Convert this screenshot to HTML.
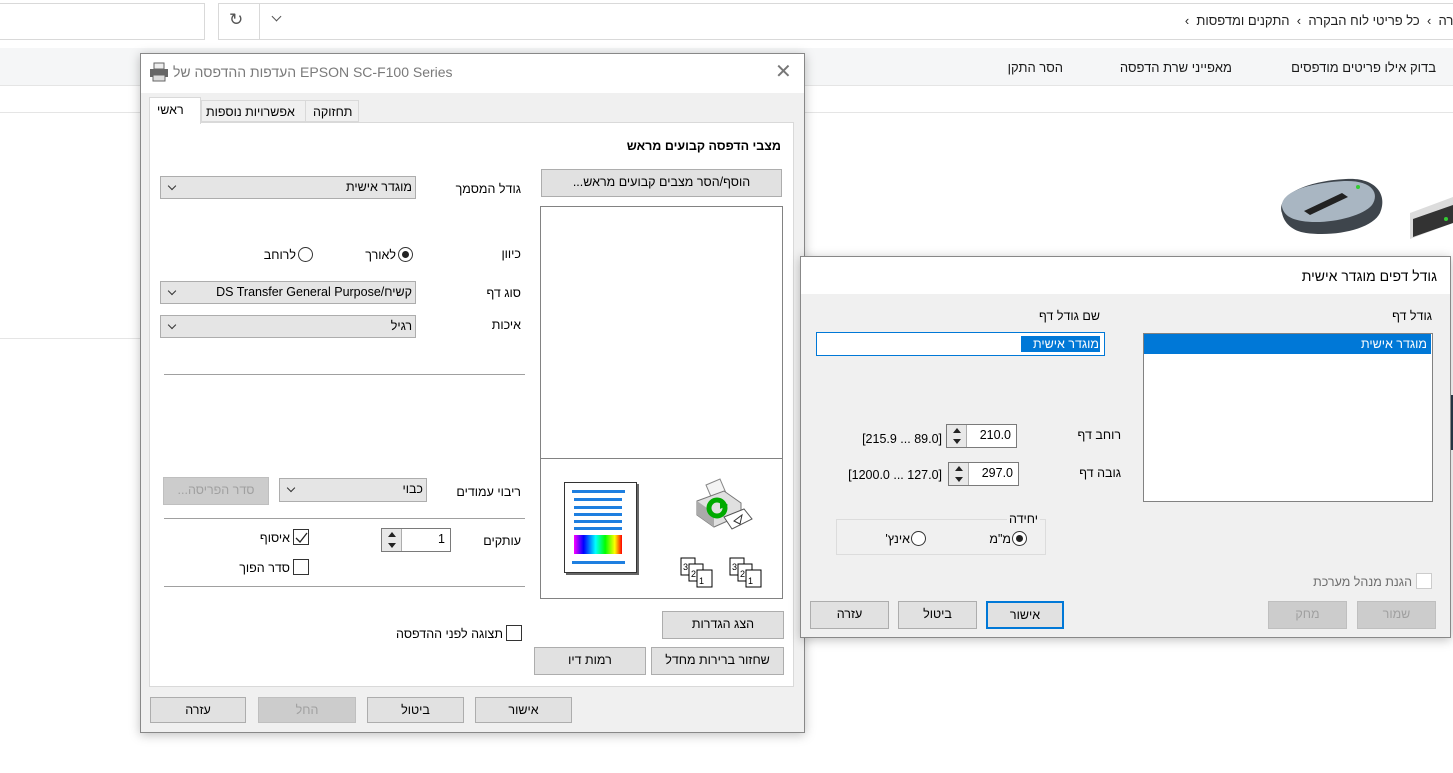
<!DOCTYPE html>
<html><head><meta charset="utf-8"><style>
*{box-sizing:border-box;margin:0;padding:0}
body{width:1453px;height:773px;position:relative;overflow:hidden;background:#fff;font-family:"Liberation Sans","DejaVu Sans",sans-serif;font-size:12.5px;color:#000}
.a{position:absolute}
.r{position:absolute;direction:rtl;white-space:nowrap;line-height:16px}
.btn{position:absolute;background:#e1e1e1;border:1px solid #adadad;text-align:center;direction:rtl;line-height:25px;white-space:nowrap}
.dis{color:#a0a0a0;background:#ccc;border-color:#bfbfbf}
.cb{position:absolute;background:#e5e5e5;border:1px solid #adadad;direction:rtl;padding-right:3px;line-height:21px;white-space:nowrap}
.cb:after{content:"";position:absolute;left:8px;top:6px;width:5px;height:5px;border-right:1px solid #333;border-bottom:1px solid #333;transform:rotate(45deg)}
.chk{position:absolute;width:16px;height:16px;border:1px solid #333;background:#fff}
.rad{position:absolute;width:15px;height:15px;border:1px solid #333;border-radius:50%;background:#fff}
.rad.on:after{content:"";position:absolute;left:3px;top:3px;width:7px;height:7px;border-radius:50%;background:#222}
.hr{position:absolute;height:1px;background:#a0a0a0}
.spin{position:absolute;border:1px solid #7a7a7a;background:#fff}
.spin .b{position:absolute;left:0;top:0;width:20px;height:100%;background:#e8e8e8;border-right:1px solid #adadad}
.spin .b:before{content:"";position:absolute;left:6px;top:3px;border:4px solid transparent;border-bottom:5px solid #222;border-top:0}
.spin .b:after{content:"";position:absolute;left:6px;bottom:3px;border:4px solid transparent;border-top:5px solid #222;border-bottom:0}
.spin .v{position:absolute;right:5px;top:3px}
</style></head><body>
<div class="a" style="left:-1px;top:3px;width:206px;height:37px;border:1px solid #d9d9d9"></div>
<div class="a" style="left:218px;top:3px;width:1240px;height:37px;border:1px solid #d9d9d9"></div>
<div class="a" style="left:259px;top:4px;width:1px;height:35px;background:#d9d9d9"></div>
<div class="a" style="left:229px;top:10px;font-size:17px;color:#555">↻</div>
<div class="a" style="left:273px;top:13px;width:7px;height:7px;border-right:1px solid #555;border-bottom:1px solid #555;transform:rotate(45deg)"></div>
<div class="r" style="right:-8px;top:13px;color:#222;font-size:13px">קרה &nbsp;›&nbsp; כל פריטי לוח הבקרה &nbsp;›&nbsp; התקנים ומדפסות &nbsp;›</div>
<div class="a" style="left:0;top:48px;width:1453px;height:38px;background:#f5f6f7;border-bottom:1px solid #e5e5e5"></div>
<div class="r" style="right:17px;top:60px;color:#1a1a1a;font-size:13px">בדוק אילו פריטים מודפסים</div>
<div class="r" style="right:221px;top:60px;color:#1a1a1a;font-size:13px">מאפייני שרת הדפסה</div>
<div class="r" style="right:390px;top:60px;color:#1a1a1a;font-size:13px">הסר התקן</div>
<div class="a" style="left:0;top:112px;width:1453px;height:1px;background:#e5e5e5"></div>
<div class="a" style="left:0;top:338px;width:140px;height:1px;background:#e5e5e5"></div>
<svg class="a" style="left:1276px;top:175px" width="112" height="64"><path d="M6 38 C0 20 30 6 70 4 C100 2 112 20 104 38 C96 54 60 62 30 58 C16 56 8 48 6 38Z" fill="#3e454c"/><path d="M6 32 C4 18 30 8 68 6 C96 5 104 18 96 30 C86 42 50 50 26 46 C14 44 8 40 6 32Z" fill="#a9b6c2"/><path d="M28 36 L66 18 L72 22 L34 40Z" fill="#222"/><circle cx="82" cy="12" r="2" fill="#3c3"/></svg>
<svg class="a" style="left:1410px;top:193px" width="43" height="50"><path d="M0 20 L43 4 L43 30 L0 46Z" fill="#dcdcdc"/><path d="M3 26 L43 12 L43 30 L3 44Z" fill="#333"/><circle cx="36" cy="26" r="2" fill="#3c3"/></svg>
<div class="a" style="left:1447px;top:395px;width:6px;height:55px;background:#2a3a4a"></div>

<div class="a" style="left:140px;top:53px;width:665px;height:680px;background:#f0f0f0;border:1px solid #888;box-shadow:0 2px 10px rgba(0,0,0,.25)"></div>
<div class="a" style="left:141px;top:54px;width:663px;height:39px;background:#fff"></div>
<svg class="a" style="left:149px;top:62px" width="20" height="20"><rect x="5" y="1" width="10" height="6" fill="#eee" stroke="#666"/><rect x="1" y="7" width="18" height="8" fill="#666"/><rect x="4" y="13" width="12" height="6" fill="#ddd" stroke="#666"/></svg>
<div class="a" style="left:173px;top:64px;font-size:14px;color:#7a7a7a;white-space:nowrap">העדפות ההדפסה של EPSON SC-F100 Series</div>
<div class="a" style="left:775px;top:59px;font-size:20px;color:#777;font-weight:300">✕</div>
<div class="a" style="left:149px;top:122px;width:645px;height:565px;background:#fff;border:1px solid #d9d9d9"></div>
<div class="a" style="left:149px;top:97px;width:52px;height:27px;background:#fff;border:1px solid #d9d9d9;border-bottom:none"></div>
<div class="r" style="left:157px;top:102px">ראשי</div>
<div class="a" style="left:201px;top:100px;width:105px;height:22px;background:#f0f0f0;border:1px solid #d9d9d9"></div>
<div class="r" style="left:206px;top:104px">אפשרויות נוספות</div>
<div class="a" style="left:305px;top:100px;width:54px;height:22px;background:#f0f0f0;border:1px solid #d9d9d9"></div>
<div class="r" style="left:313px;top:104px">תחזוקה</div>

<div class="r" style="right:672px;top:138px;font-weight:bold">מצבי הדפסה קבועים מראש</div>
<div class="btn" style="left:541px;top:169px;width:241px;height:28px">הוסף/הסר מצבים קבועים מראש...</div>
<div class="a" style="left:540px;top:206px;width:243px;height:253px;border:1px solid #828282;background:#fff"></div>
<div class="a" style="left:540px;top:458px;width:243px;height:141px;border:1px solid #828282;background:#fff"></div>
<div class="a" style="left:564px;top:482px;width:73px;height:91px;background:#fff;border:1px solid #333;box-shadow:2px 2px 0 #666"></div>
<svg class="a" style="left:570px;top:490px" width="60" height="80">
<rect x="2" y="0" width="53" height="3" fill="#1e7fe0"/>
<g fill="#1e7fe0"><rect x="4" y="8" width="48" height="3"/><rect x="4" y="16" width="48" height="3"/><rect x="4" y="23" width="48" height="3"/><rect x="4" y="30" width="48" height="3"/><rect x="4" y="37" width="48" height="3"/></g>
<defs><linearGradient id="rb"><stop offset="0" stop-color="#f0f"/><stop offset=".2" stop-color="#00f"/><stop offset=".45" stop-color="#0ff"/><stop offset=".65" stop-color="#0f0"/><stop offset=".85" stop-color="#ff0"/><stop offset="1" stop-color="#f00"/></linearGradient></defs>
<rect x="4" y="45" width="48" height="19" fill="url(#rb)"/>
<rect x="2" y="71" width="53" height="3" fill="#1e7fe0"/></svg>
<svg class="a" style="left:694px;top:477px" width="60" height="60">
<path d="M12 8 L26 2 L32 16 L18 22Z" fill="#f4f4f4" stroke="#888"/>
<path d="M3 24 L30 14 L47 26 L47 38 L20 50 L3 38Z" fill="#e0e0e0" stroke="#777"/>
<path d="M3 24 L20 36 L20 50 L3 38Z" fill="#aaa"/>
<path d="M30 40 L50 32 L58 42 L38 52Z" fill="#fff" stroke="#555"/>
<path d="M40 44 L48 38 L46 47Z" fill="none" stroke="#333"/>
<circle cx="23" cy="31" r="8" fill="none" stroke="#0a0" stroke-width="5"/><path d="M26 22 L34 28 L26 32Z" fill="#0a0"/></svg>
<svg class="a" style="left:680px;top:557px" width="40" height="32"><g fill="#fff" stroke="#000" stroke-width="1"><rect x="1" y="1" width="14" height="17"/><rect x="9" y="7" width="14" height="17"/><rect x="17" y="13" width="15" height="17"/></g><g font-size="9" font-family="Liberation Sans"><text x="3" y="13">3</text><text x="11" y="20">2</text><text x="19" y="27">1</text></g></svg>
<svg class="a" style="left:729px;top:557px" width="40" height="32"><g fill="#fff" stroke="#000" stroke-width="1"><rect x="1" y="1" width="14" height="17"/><rect x="9" y="7" width="14" height="17"/><rect x="17" y="13" width="15" height="17"/></g><g font-size="9" font-family="Liberation Sans"><text x="3" y="13">3</text><text x="11" y="20">2</text><text x="19" y="27">1</text></g></svg>

<div class="cb" style="left:160px;top:176px;width:256px;height:23px">מוגדר אישית</div>
<div class="r" style="right:932px;top:181px">גודל המסמך</div>
<div class="r" style="right:932px;top:246px">כיוון</div>
<div class="rad on" style="left:398px;top:247px"></div><div class="r" style="right:1057px;top:247px">לאורך</div>
<div class="rad" style="left:298px;top:247px"></div><div class="r" style="right:1157px;top:247px">לרוחב</div>
<div class="r" style="right:932px;top:285px">סוג דף</div>
<div class="cb" style="left:160px;top:281px;width:256px;height:23px">קשיח/DS Transfer General Purpose</div>
<div class="r" style="right:932px;top:317px">איכות</div>
<div class="cb" style="left:160px;top:315px;width:256px;height:23px">רגיל</div>
<div class="hr" style="left:164px;top:374px;width:361px"></div>
<div class="cb" style="left:279px;top:478px;width:148px;height:24px">כבוי</div>
<div class="r" style="right:932px;top:484px">ריבוי עמודים</div>
<div class="btn dis" style="left:163px;top:477px;width:106px;height:28px">סדר הפריסה...</div>
<div class="hr" style="left:164px;top:518px;width:361px"></div>
<div class="r" style="right:932px;top:533px">עותקים</div>
<div class="spin" style="left:381px;top:528px;width:70px;height:24px"><div class="b"></div><span class="v">1</span></div>
<div class="chk" style="left:293px;top:529px"></div><svg class="a" style="left:294px;top:530px" width="15" height="15"><path d="M2 8 L6 12 L13 3" fill="none" stroke="#222" stroke-width="1.3"/></svg>
<div class="r" style="right:1163px;top:530px">איסוף</div>
<div class="chk" style="left:293px;top:559px"></div><div class="r" style="right:1163px;top:560px">סדר הפוך</div>
<div class="hr" style="left:164px;top:586px;width:361px"></div>
<div class="chk" style="left:506px;top:625px"></div><div class="r" style="right:950px;top:626px">תצוגה לפני ההדפסה</div>
<div class="btn" style="left:662px;top:611px;width:122px;height:28px">הצג הגדרות</div>
<div class="btn" style="left:651px;top:647px;width:133px;height:28px">שחזור ברירות מחדל</div>
<div class="btn" style="left:534px;top:647px;width:112px;height:28px">רמות דיו</div>
<div class="btn" style="left:150px;top:697px;width:96px;height:26px;line-height:24px">עזרה</div>
<div class="btn dis" style="left:258px;top:697px;width:98px;height:26px;line-height:24px">החל</div>
<div class="btn" style="left:367px;top:697px;width:97px;height:26px;line-height:24px">ביטול</div>
<div class="btn" style="left:475px;top:697px;width:97px;height:26px;line-height:24px">אישור</div>

<div class="a" style="left:800px;top:256px;width:651px;height:382px;background:#f0f0f0;border:1px solid #888;box-shadow:0 2px 10px rgba(0,0,0,.25)"></div>
<div class="a" style="left:801px;top:257px;width:649px;height:37px;background:#fff"></div>
<div class="r" style="right:16px;top:268px;font-size:14px">גודל דפים מוגדר אישית</div>
<div class="r" style="right:21px;top:308px">גודל דף</div>
<div class="a" style="left:1143px;top:333px;width:290px;height:169px;background:#fff;border:1px solid #828282"></div>
<div class="a" style="left:1144px;top:334px;width:287px;height:20px;background:#0078d7"></div>
<div class="r" style="right:26px;top:336px;color:#fff">מוגדר אישית</div>
<div class="r" style="right:353px;top:308px">שם גודל דף</div>
<div class="a" style="left:816px;top:332px;width:289px;height:24px;background:#fff;border:1px solid #0078d7"></div>
<div class="a" style="left:1021px;top:336px;width:79px;height:16px;background:#0078d7"></div>
<div class="r" style="right:354px;top:336px;color:#fff">מוגדר אישית</div>
<div class="r" style="right:332px;top:427px">רוחב דף</div>
<div class="spin" style="left:946px;top:424px;width:71px;height:24px"><div class="b"></div><span class="v">210.0</span></div>
<div class="r" style="right:511px;top:431px;direction:ltr">[215.9 ... 89.0]</div>
<div class="r" style="right:332px;top:465px">גובה דף</div>
<div class="spin" style="left:948px;top:462px;width:71px;height:24px"><div class="b"></div><span class="v">297.0</span></div>
<div class="r" style="right:511px;top:467px;direction:ltr">[1200.0 ... 127.0]</div>
<div class="a" style="left:836px;top:519px;width:210px;height:36px;border:1px solid #dcdcdc"></div>
<div class="r" style="right:413px;top:511px;background:#f0f0f0;padding:0 2px">יחידה</div>
<div class="rad on" style="left:1012px;top:531px"></div><div class="r" style="right:442px;top:531px">מ"מ</div>
<div class="rad" style="left:911px;top:531px"></div><div class="r" style="right:543px;top:531px">אינץ'</div>
<div class="chk" style="left:1416px;top:573px;border-color:#ccc"></div>
<div class="r" style="right:41px;top:574px;color:#6d6d6d">הגנת מנהל מערכת</div>
<div class="btn" style="left:810px;top:601px;width:79px;height:28px">עזרה</div>
<div class="btn" style="left:898px;top:601px;width:79px;height:28px">ביטול</div>
<div class="btn" style="left:986px;top:601px;width:78px;height:28px;border:2px solid #0078d7;line-height:24px">אישור</div>
<div class="btn dis" style="left:1268px;top:601px;width:79px;height:28px">מחק</div>
<div class="btn dis" style="left:1357px;top:601px;width:79px;height:28px">שמור</div>
</body></html>
